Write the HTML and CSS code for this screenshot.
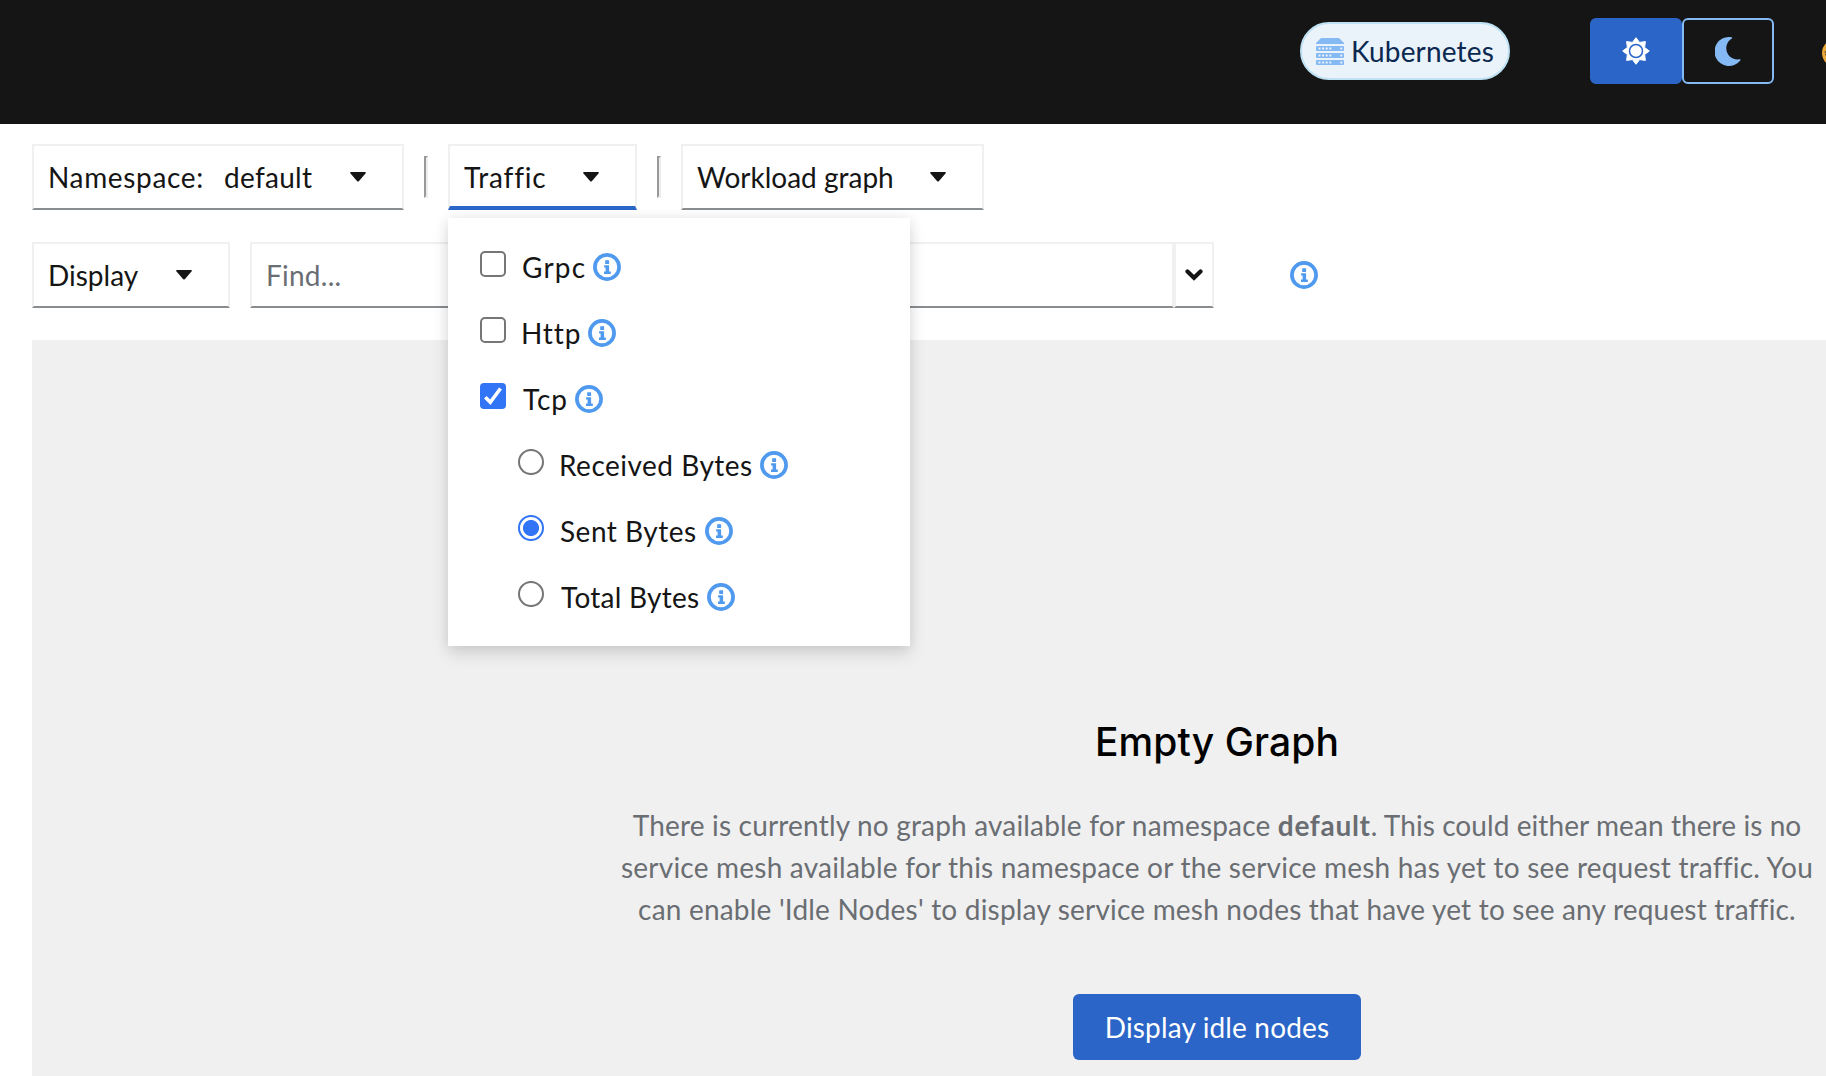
FILE: index.html
```html
<!DOCTYPE html>
<html lang="en">
<head>
<meta charset="utf-8">
<title>Graph</title>
<link rel="stylesheet" href="styles.css">
</head>
<body>
<svg class="defs" aria-hidden="true">
  <symbol id="info" viewBox="0 0 28 28">
    <circle cx="14" cy="14" r="12.1" fill="none" stroke="currentColor" stroke-width="3.7"/>
    <path fill="currentColor" d="M12.2 7.3h3.9v3.6h-3.9zM11.1 12.2h5v6.3h1.7v2.4h-6.8v-2.4h1.6v-4h-1.5z"/>
  </symbol>
  <symbol id="caret" viewBox="0 0 16 10">
    <path fill="currentColor" d="M1 0h14q1.400.3.5 1.400L9 9q-1 1-2 0L.5 1.400Q-.4.3 1 0z"/>
  </symbol>
</svg>

<header class="masthead">
  <span class="cluster">
    <svg class="cluster-icon" viewBox="0 0 28 27">
      <g fill="#84b9f3"><path d="M5 0h18l5 5v1H0V5z"/><rect y="8" width="28" height="5" rx="1"/><rect y="15" width="28" height="5" rx="1"/><rect y="22" width="28" height="5" rx="1"/></g>
      <g fill="#eaf2fa"><path d="M2.500 9.500h2v2h-2zm3.600 0h2v2h-2zm3.600 0h2v2h-2zm3.600 0h2v2h-2zm11 0h2v2h-2zM2.500 16.500h2v2h-2zm3.600 0h2v2h-2zm3.600 0h2v2h-2zm3.600 0h2v2h-2zm11 0h2v2h-2zM2.500 23.500h2v2h-2zm3.600 0h2v2h-2zm3.600 0h2v2h-2zm3.600 0h2v2h-2zm11 0h2v2h-2z"/></g>
    </svg>
    <span>Kubernetes</span>
  </span>
  <div class="theme">
    <button class="theme-btn active" aria-label="Light theme">
      <svg width="28" height="28" viewBox="0 0 28 28">
        <path fill="#fff" stroke="#fff" stroke-linejoin="round" d="M14 .7L17.600 5.400L23.400 4.600L22.600 10.400L27.300 14L22.600 17.600L23.400 23.400L17.600 22.600L14 27.300L10.400 22.600L4.600 23.400L5.400 17.600L.7 14L5.400 10.400L4.600 4.600L10.400 5.400z"/>
        <circle cx="14" cy="14" r="6.500" fill="#fff" stroke="#2a65c7" stroke-width="1.500"/>
      </svg>
    </button>
    <button class="theme-btn" aria-label="Dark theme">
      <svg width="26" height="29" viewBox="0 0 26 29">
        <path fill="#84b9f3" d="M14.500 0a14.500 14.500 0 1 0 11 23.300q.4-1-.7-1C17 23.400 11.300 18 11.300 11.200 11.300 7 13.500 3.400 17 1.400q.8-.9-.3-1.200A14 14 0 0 0 14.500 0z"/>
      </svg>
    </button>
  </div>
  <svg class="bell" viewBox="0 0 4 28"><path d="M4 4.200A14 14 0 0 0 4 23.800z" fill="#e8a83a"/><path d="M2.700 13H4M3 15.500h1" stroke="#5b4a2a" stroke-width="1.300"/></svg>
</header>

<div class="toolbar">
  <div class="row">
    <div class="select namespace"><span class="t-ns">Namespace:</span><span class="t-default">default</span><svg class="caret"><use href="#caret"/></svg></div>
    <i class="divider"></i>
    <div class="select traffic open">
      <span class="t-traffic">Traffic</span><svg class="caret"><use href="#caret"/></svg>
      <div class="menu">
        <label class="item"><span class="box"></span><span class="label grpc">Grpc</span><svg class="info"><use href="#info"/></svg></label>
        <label class="item"><span class="box"></span><span class="label http">Http</span><svg class="info"><use href="#info"/></svg></label>
        <label class="item"><span class="box checked"><svg viewBox="0 0 26 26"><path d="M5.300 14.200l5 5L20.500 5.500" fill="none" stroke="#fff" stroke-width="3.600"/></svg></span><span class="label tcp">Tcp</span><svg class="info"><use href="#info"/></svg></label>
        <label class="item sub"><span class="radio"></span><span class="label received">Received Bytes</span><svg class="info"><use href="#info"/></svg></label>
        <label class="item sub"><span class="radio on"></span><span class="label sent">Sent Bytes</span><svg class="info"><use href="#info"/></svg></label>
        <label class="item sub"><span class="radio"></span><span class="label total">Total Bytes</span><svg class="info"><use href="#info"/></svg></label>
      </div>
    </div>
    <i class="divider"></i>
    <div class="select workload"><span>Workload graph</span><svg class="caret"><use href="#caret"/></svg></div>
  </div>
  <div class="row">
    <div class="select display"><span>Display</span><svg class="caret"><use href="#caret"/></svg></div>
    <div class="find-group">
      <div class="find">Find...</div>
      <div class="find-toggle"><svg width="18" height="12" viewBox="0 0 18 12"><path d="M2.500 2.500L9 8.800l6.500-6.300" fill="none" stroke="#151515" stroke-width="4.200" stroke-linecap="round"/></svg></div>
    </div>
    <svg class="info help"><use href="#info"/></svg>
  </div>
</div>

<main class="graph">
  <div class="empty">
    <h1 class="title">Empty Graph</h1>
    <p class="message"><span class="line1">There is currently no graph available for namespace <b>default</b><span class="tail">. This could either mean there is no</span></span><br><span class="line2">service mesh available for this namespace or the service mesh has yet to see request traffic. You</span><br><span class="line3">can enable 'Idle Nodes' to display service mesh nodes that have yet to see any request traffic.</span></p>
    <button class="primary">Display idle nodes</button>
  </div>
</main>
</body>
</html>
```
FILE: styles.css
```css
* { box-sizing: border-box; }
html, body { height: 100%; }
body {
  margin: 0;
  overflow: hidden;
  background: #fff;
  color: #151515;
  font: 28px/42px Lato, sans-serif;
}
svg { display: block; flex: none; }
button { border: 0; padding: 0; font: inherit; }
.defs { position: absolute; width: 0; height: 0; }

.masthead {
  display: flex;
  align-items: flex-start;
  height: 124px;
  padding: 18px 0 0 1300px;
  background: #151515;
}
.cluster {
  display: flex;
  flex: none;
  align-items: center;
  gap: 7px;
  width: 210px;
  height: 58px;
  margin-top: 4px;
  padding-left: 14px;
  border: 2px solid #bee1f4;
  border-radius: 29px;
  background: #eaf2fa;
  color: #0a2850;
  letter-spacing: .17px;
}
.cluster-icon { width: 28px; height: 27px; margin-top: 1px; }
.theme { display: flex; flex: none; margin-left: 80px; }
.theme-btn {
  display: flex;
  align-items: center;
  justify-content: center;
  width: 92px;
  height: 66px;
  border: 2px solid #84b9f3;
  border-radius: 6px;
  background: transparent;
}
.theme-btn.active { border-color: #2a65c7; background: #2a65c7; }
.bell { width: 4px; height: 28px; margin: 21px 0 0 48px; }

.toolbar {
  display: flex;
  flex-direction: column;
  gap: 32px;
  padding: 20px 0 32px 32px;
}
.row { display: flex; gap: 20px; height: 66px; }
.select {
  position: relative;
  display: flex;
  align-items: center;
  justify-content: space-between;
  padding: 0 36px 0 14px;
  border: 2px solid #f0f0f0;
  border-bottom-color: #8a8d90;
  white-space: nowrap;
}
.select.open { border-bottom: 4px solid #2a65c7; padding-top: 2px; }
.namespace { width: 372px; }
.traffic { width: 189px; }
.workload { width: 303px; }
.display { width: 198px; }
.t-ns { width: 176px; letter-spacing: .65px; }
.t-default { flex: 1; letter-spacing: .3px; }
.t-traffic { letter-spacing: .8px; }
.caret { width: 16px; height: 10px; }
.divider {
  width: 4px;
  height: 42px;
  margin-top: 12px;
  border: 2px solid #ededed;
  border-top-color: #999;
  border-left-color: #999;
}

.menu {
  position: absolute;
  z-index: 2;
  top: 72px;
  left: -2px;
  width: 462px;
  padding: 16px 32px;
  background: #fff;
  box-shadow: 0 8px 16px rgba(3, 3, 3, .12), 0 0 12px rgba(3, 3, 3, .08);
}
.item { display: flex; align-items: center; height: 66px; }
.sub { padding-left: 38px; }
.box, .radio {
  width: 26px;
  height: 26px;
  margin: 0 15px 6px 0;
  border: 2px solid #767676;
  border-radius: 5px;
}
.radio { border-radius: 50%; }
.checked { border: 0; border-radius: 4px; background: #3174f6; }
.radio.on {
  border-color: #3174f6;
  background: radial-gradient(circle, #3174f6 7.6px, transparent 8.4px);
}
.grpc { width: 72px; padding-left: 1px; letter-spacing: 1.2px; }
.http { width: 67px; letter-spacing: .9px; }
.tcp { width: 54px; padding-left: 2px; letter-spacing: .9px; }
.received { width: 201px; letter-spacing: .49px; }
.sent { width: 146px; padding-left: 1px; letter-spacing: .5px; }
.total { width: 148px; padding-left: 2px; letter-spacing: .26px; }
.info { width: 28px; height: 28px; color: #4f99ee; }

.find-group { display: flex; width: 964px; }
.find, .find-toggle {
  display: flex;
  align-items: center;
  border: 2px solid #f0f0f0;
  border-bottom-color: #8a8d90;
}
.find { flex: 1; padding: 0 0 0 14px; color: #6a6e73; letter-spacing: .25px; }
.find-toggle { width: 40px; justify-content: center; padding: 0 1px 1px 0; }
.help { margin: 19px 0 0 56px; }

.graph {
  height: 736px;
  margin-left: 32px;
  padding: 376px 0 0 584px;
  background: #f0f0f0;
}
.empty {
  display: flex;
  flex-direction: column;
  align-items: center;
  width: 1202px;
}
.title {
  margin: 0;
  color: #000;
  font: 500 39px/52px Inter, sans-serif;
  letter-spacing: .1px;
}
.message {
  margin: 36px 0 64px;
  color: #6a6e73;
  text-align: center;
  white-space: nowrap;
}
.line1 { letter-spacing: .18px; }
.line1 b { letter-spacing: .7px; }
.line1 .tail { letter-spacing: .08px; }
.line2 { letter-spacing: .215px; }
.line3 { letter-spacing: .2px; }
.primary {
  width: 288px;
  height: 66px;
  border-radius: 6px;
  background: #2a65c7;
  color: #fff;
  letter-spacing: .15px;
}
```
